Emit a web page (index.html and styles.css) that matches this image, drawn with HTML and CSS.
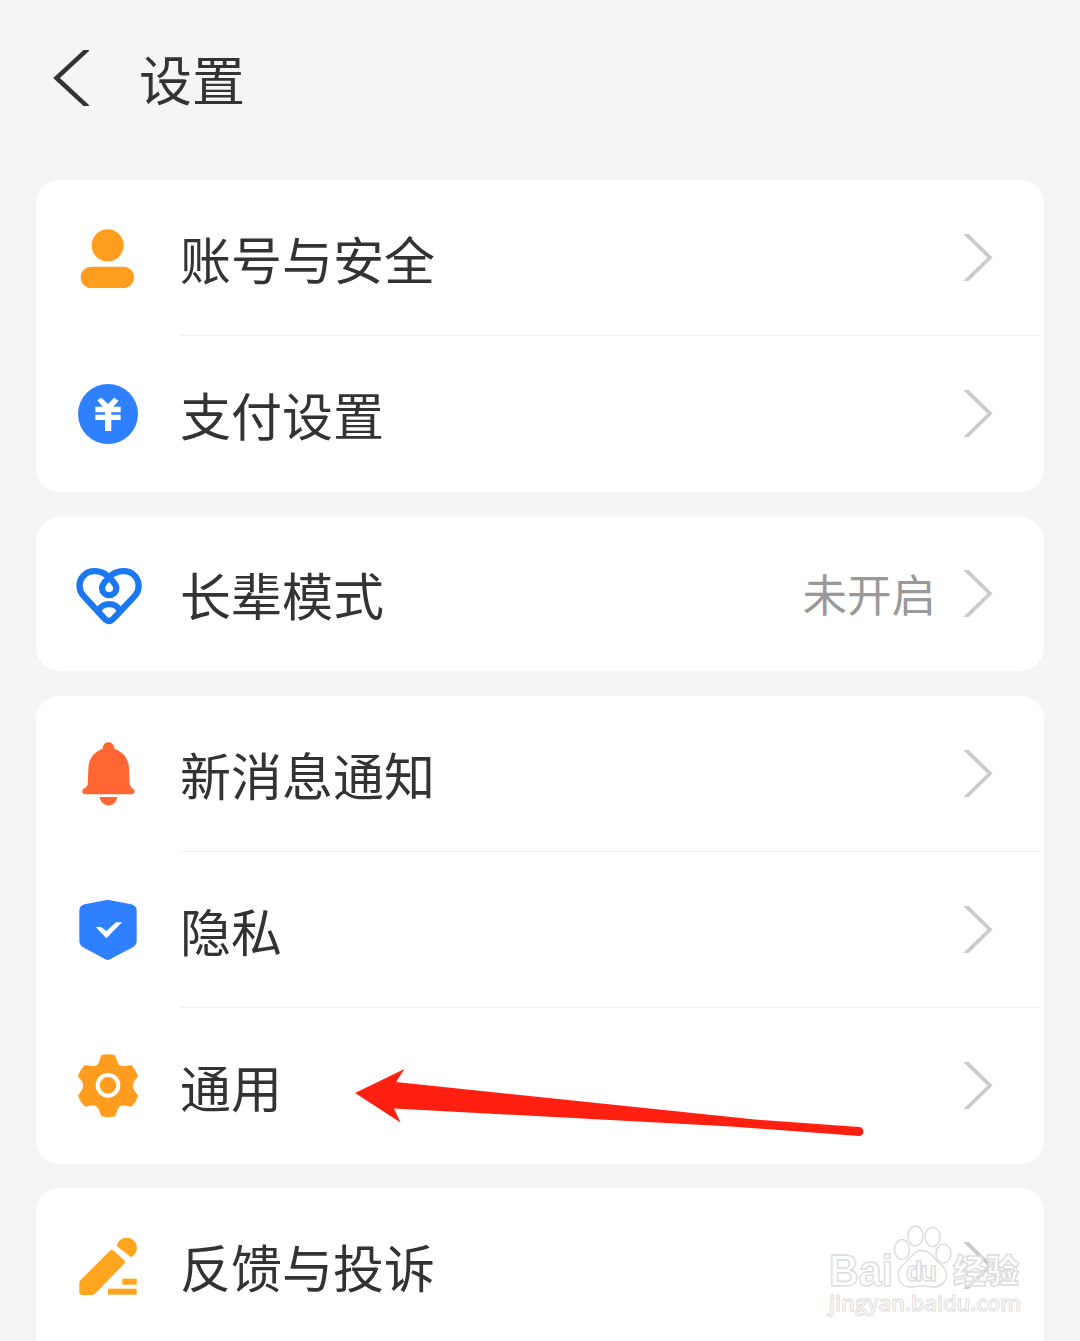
FILE: index.html
```
<!DOCTYPE html>
<html lang="zh-CN">

<head>
    <meta charset="UTF-8">
    <title>设置</title>
    <link rel="stylesheet" href="styles.css">
</head>

<body>
    <div class="header">
        <svg class="back" viewBox="0 0 36 56">
            <path d="M36-2 3.500 28 36 58" />
        </svg>
        <h1>设置</h1>
    </div>

    <div class="card">
        <div class="row">
            <svg class="icon orange" viewBox="36 36 216 216">
                <circle cx="143" cy="106" r="48" />
                <rect x="62" y="170" width="160" height="64" rx="32" />
            </svg>
            <div class="label">账号与安全</div>
            <svg class="chevron" viewBox="0 0 30 47"><path d="M0-2 26 23.500 0 49" /></svg>
        </div>
        <div class="row">
            <svg class="icon blue" viewBox="36 39 216 216">
                <circle cx="144" cy="147" r="90" />
                <path class="white" d="M112 106 124 98 144 117 162 98 176 107 160 125H182V142H154V149H182V165H154V198H135V165H106V149H135V142H106V125H128Z" />
            </svg>
            <div class="label">支付设置</div>
            <svg class="chevron" viewBox="0 0 30 47"><path d="M0-2 26 23.500 0 49" /></svg>
        </div>
    </div>

    <div class="card elder">
        <div class="row">
            <svg class="icon heart" viewBox="36 24 216 216">
                <path d="M147 82C125 58 88 58 72 76C54 94 55 120 70 137L132 204Q147 222 162 204L225 137C240 120 240 94 223 76C206 58 169 58 147 82Z" />
                <path d="M147 82C135 95 126 103 126 114A21.500 21.500 0 0 0 169 114C169 103 159 95 147 82Z" />
                <path d="M115 184C124 155 171 155 180 184" />
            </svg>
            <div class="label">长辈模式</div>
            <div class="value">未开启</div>
            <svg class="chevron" viewBox="0 0 30 47"><path d="M0-2 26 23.500 0 49" /></svg>
        </div>
    </div>

    <div class="card">
        <div class="row">
            <svg class="icon red" viewBox="36 39 216 216">
                <path d="M145 52C155 52 162 60 163 71C190 80 207 102 207 132L209 180 216 190Q224 192 224 199T216 208H75Q67 207 67 199T75 190L83 180 85 132C85 102 102 80 128 71C129 60 135 52 145 52Z" />
                <path d="M119 216H172C168 233 158 241 146 241S122 233 119 216Z" />
            </svg>
            <div class="label">新消息通知</div>
            <svg class="chevron" viewBox="0 0 30 47"><path d="M0-2 26 23.500 0 49" /></svg>
        </div>
        <div class="row">
            <svg class="icon blue" viewBox="36 42 216 216">
                <path d="M136 61Q143 58 150 61L214 73Q230 77 230 92V182Q230 194 220 201L150 238Q143 242 136 238L68 201Q58 194 58 182V92Q58 77 74 73Z" />
                <path class="white" d="M107 141H123L139 153 168 127H186L139 175Z" />
            </svg>
            <div class="label">隐私</div>
            <svg class="chevron" viewBox="0 0 30 47"><path d="M0-2 26 23.500 0 49" /></svg>
        </div>
        <div class="row">
            <svg class="icon orange" viewBox="36 45 216 216">
                <path d="M124 60Q145 56 165 60L173 83Q178 93 190 94L214 90Q228 104 234 124L221 141Q216 152 221 163L234 182Q228 202 214 215L190 211Q178 213 173 223L166 244Q145 249 124 244L116 223Q111 213 99 211L75 215Q60 200 54 182L67 163Q72 152 67 141L54 124Q60 104 75 90L99 94Q111 93 116 83Z" />
                <circle class="ring" cx="144" cy="151" r="31" />
            </svg>
            <div class="label">通用</div>
            <svg class="chevron" viewBox="0 0 30 47"><path d="M0-2 26 23.500 0 49" /></svg>
        </div>
    </div>

    <div class="card last">
        <div class="row">
            <svg class="icon yellow" viewBox="36 28 216 216">
                <path d="M149 91Q156 85 163 92L192 118Q197 124 192 130L105 219Q101 223 95 223H66Q58 223 58 215V188Q58 182 62 178Z" />
                <path d="M171 75C173 60 185 51 200 51C218 51 231 65 231 82C230 94 225 103 215 109C211 109 209 107 206 104L175 80Q171 78 171 75Z" />
                <rect x="187" y="174" width="43" height="18" />
                <rect x="144" y="204" width="86" height="18" />
            </svg>
            <div class="label">反馈与投诉</div>
            <svg class="chevron" viewBox="0 0 30 47"><path d="M0-2 26 23.500 0 49" /></svg>
        </div>
    </div>

    <svg class="arrow" viewBox="0 0 510 70">
        <path d="M0 25 49.500 1 41 14 400 51.500 504 59A4.500 4.500 0 0 1 504 68L376 58.500 39 40.500 45.500 54.500Z" />
    </svg>

    <svg class="watermark" viewBox="0 0 204 104">
        <text class="brand" x="3" y="65" textLength="64" lengthAdjust="spacingAndGlyphs">Bai</text>
        <ellipse cx="76" cy="28.500" rx="7.500" ry="10" />
        <ellipse cx="89.500" cy="15" rx="7.500" ry="10" />
        <ellipse cx="106.500" cy="16" rx="7.500" ry="9.500" />
        <ellipse cx="117.500" cy="32.500" rx="7.500" ry="9.500" />
        <path d="M96 29.500C105 29.500 108 38 113 42C120 47 123 55 118 61C112 69 104 65 96 65S82 69 75 62C70 55 72 47 79 42C85 37 87 29.500 96 29.500Z" />
        <text class="du" x="80" y="60" textLength="31">du</text>
        <text class="cn" x="127" y="62" textLength="66">经验</text>
        <text class="url" x="3" y="90" textLength="192" lengthAdjust="spacingAndGlyphs">jingyan.baidu.com</text>
    </svg>
</body>

</html>
```
FILE: styles.css
```
body {
    margin: 0;
    height: 1341px;
    position: relative;
    overflow: hidden;
    background-color: #f5f5f5;
    color: #333;
    font-family: "Noto Sans CJK SC", sans-serif;
}

.header {
    display: flex;
    align-items: center;
    height: 156px;
    padding-left: 53px;
    margin-bottom: 24px;
}

.back {
    width: 36px;
    height: 56px;
    margin-right: 50px;
    fill: none;
    stroke: #333;
    stroke-width: 4.5;
}

h1 {
    margin: 0;
    font-size: 53px;
    font-weight: 400;
    line-height: 1;
}

.card {
    margin: 0 36px 25px;
    border-radius: 24px;
    background-color: white;
}

.row {
    position: relative;
    display: flex;
    align-items: center;
    box-sizing: border-box;
    height: 156px;
    padding: 0 50px 0 36px;
}

.row + .row::before {
    content: "";
    position: absolute;
    top: -1px;
    left: 144px;
    right: 4px;
    height: 1px;
    background-color: #f0f0f0;
}

.elder .row {
    height: 154px;
}

.card.last {
    margin-top: -1px;
    margin-bottom: 0;
    border-radius: 24px 24px 0 0;
}

.icon {
    width: 72px;
    height: 72px;
    margin-right: 36px;
}

.orange {
    fill: #ff9d1e;
}

.blue {
    fill: #2f80ff;
}

.red {
    fill: #ff6633;
}

.yellow {
    fill: #ffa51e;
}

.heart {
    fill: none;
    stroke: #1c78f2;
    stroke-width: 19;
}

.white {
    fill: white;
}

.ring {
    fill: none;
    stroke: white;
    stroke-width: 12;
}

.label {
    flex: 1;
    padding-top: 1px;
    font-size: 51px;
    line-height: 1;
}

.value {
    margin-right: 28px;
    padding-bottom: 2px;
    font-size: 44.5px;
    line-height: 1;
    color: #999;
}

.chevron {
    width: 30px;
    height: 47px;
    margin-bottom: 1px;
    fill: none;
    stroke: #ccc;
    stroke-width: 3.8;
}

.arrow {
    position: absolute;
    left: 355px;
    top: 1068px;
    width: 510px;
    height: 70px;
    fill: #ff2011;
}

.watermark {
    position: absolute;
    left: 826px;
    top: 1221px;
    width: 204px;
    height: 104px;
    fill: rgba(255, 255, 255, 0.5);
    stroke: #ddd;
    stroke-width: 1.5;
}

.brand,
.du {
    font-family: "Liberation Sans", Arial, sans-serif;
    font-size: 44px;
    font-weight: bold;
}

.du {
    font-size: 27px;
}

.cn {
    font-size: 33px;
    font-weight: 900;
}

.url {
    font-family: "Open Sans", sans-serif;
    font-size: 22px;
    font-weight: 600;
    stroke-width: 1;
}
```
